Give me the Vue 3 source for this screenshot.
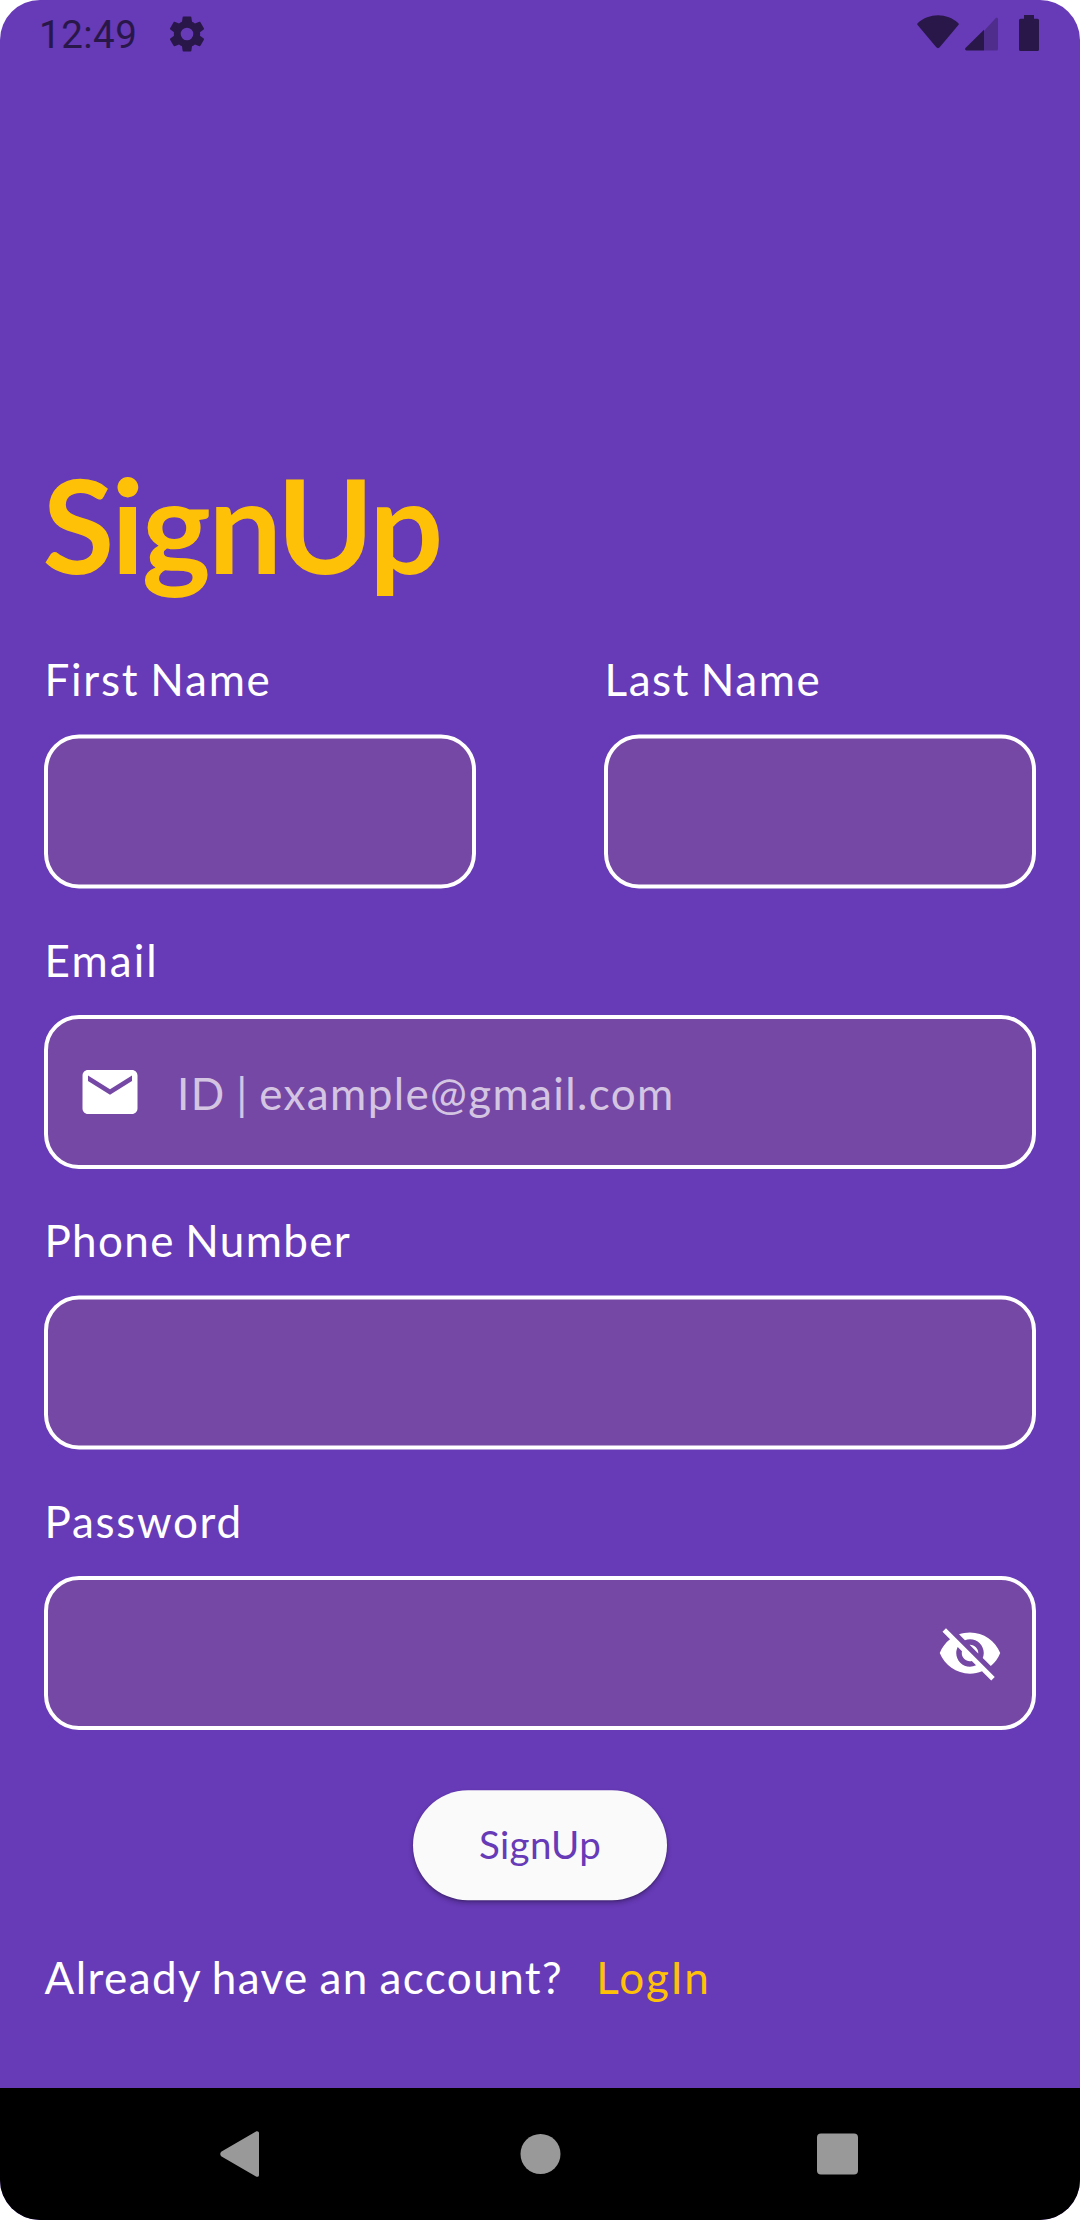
<script setup>
import { ref } from 'vue'

const firstName = ref('')
const lastName = ref('')
const email = ref('')
const phone = ref('')
const password = ref('')
</script>

<template>
  <div class="screen">
    <header class="status">
      <span class="clock">12:49</span>
      <svg class="gear" viewBox="0 0 24 24">
        <path d="M19.43 12.98c.04-.32.07-.64.07-.98s-.03-.66-.07-.98l2.11-1.65c.19-.15.24-.42.12-.64l-2-3.46c-.12-.22-.39-.3-.61-.22l-2.49 1c-.52-.4-1.08-.73-1.69-.98l-.38-2.65C14.46 2.18 14.25 2 14 2h-4c-.25 0-.46.18-.49.42l-.38 2.65c-.61.25-1.17.59-1.69.98l-2.49-1c-.23-.09-.49 0-.61.22l-2 3.46c-.13.22-.07.49.12.64l2.11 1.65c-.04.32-.07.65-.07.98s.03.66.07.98l-2.11 1.65c-.19.15-.24.42-.12.64l2 3.46c.12.22.39.3.61.22l2.49-1c.52.4 1.08.73 1.69.98l.38 2.65c.03.24.24.42.49.42h4c.25 0 .46-.18.49-.42l.38-2.65c.61-.25 1.17-.59 1.69-.98l2.49 1c.23.09.49 0 .61-.22l2-3.46c.12-.22.07-.49-.12-.64l-2.11-1.65zM12 15.6a3.6 3.6 0 1 1 0-7.2 3.6 3.6 0 0 1 0 7.2z" />
      </svg>
      <div class="indicators">
        <svg class="wifi" width="42" height="34" viewBox="0 0 42 34">
          <path d="M.6 8.2C6.500 3 13.500.3 21 .3s14.500 2.700 20.400 7.900c.5.5.5 1.300 0 1.900L22.700 32.300c-.9 1.100-2.500 1.100-3.400 0L.6 10.100c-.5-.6-.5-1.400 0-1.900z" />
        </svg>
        <svg class="signal" width="33" height="34" viewBox="0 0 33 34">
          <path opacity=".38" d="M19 14 30.600 1.200c.8-.9 2.400-.4 2.400.9V32a1.500 1.500 0 0 1-1.500 1.500H19z" />
          <path d="M19 12.700V33.500H1.500C.2 33.500-.4 32 .5 31.100z" />
        </svg>
        <svg class="battery" width="20" height="36" viewBox="0 0 20 36">
          <path d="M5 0h10v3.700h3.500A1.500 1.500 0 0 1 20 5.200v29.300a1.500 1.500 0 0 1-1.500 1.500h-17A1.500 1.500 0 0 1 0 34.500V5.200a1.500 1.500 0 0 1 1.500-1.500H5z" />
        </svg>
      </div>
    </header>

    <main class="form">
      <h1 class="title">SignUp</h1>

      <div class="row">
        <label class="field">
          <span class="label first">First Name</span>
          <span class="box half"><input v-model="firstName" type="text" /></span>
        </label>
        <label class="field">
          <span class="label last">Last Name</span>
          <span class="box half"><input v-model="lastName" type="text" /></span>
        </label>
      </div>

      <label class="field email">
        <span class="label short">Email</span>
        <span class="box">
          <svg class="icon" viewBox="0 0 24 24">
            <path d="M20 4H4c-1.100 0-1.990.9-1.990 2L2 18c0 1.100.9 2 2 2h16c1.100 0 2-.9 2-2V6c0-1.100-.9-2-2-2zm0 4l-8 5-8-5V6l8 5 8-5v2z" />
          </svg>
          <input v-model="email" class="hinted" type="text" placeholder="ID | example@gmail.com" />
        </span>
      </label>

      <label class="field phone">
        <span class="label number">Phone Number</span>
        <span class="box half"><input v-model="phone" type="text" /></span>
      </label>

      <label class="field password">
        <span class="label secret">Password</span>
        <span class="box">
          <input v-model="password" type="password" />
          <svg class="icon" viewBox="0 0 24 24">
            <path d="M12 7c2.760 0 5 2.240 5 5 0 .65-.13 1.260-.36 1.830l2.920 2.920c1.510-1.260 2.700-2.890 3.430-4.750-1.730-4.390-6-7.500-11-7.500-1.400 0-2.740.25-3.980.7l2.160 2.160C10.740 7.130 11.350 7 12 7zM2 4.270l2.280 2.280.46.46C3.080 8.300 1.780 10.020 1 12c1.730 4.390 6 7.500 11 7.500 1.550 0 3.030-.3 4.380-.84l.42.42L19.730 22 21 20.730 3.270 3 2 4.270zM7.530 9.800l1.550 1.550c-.05.21-.08.43-.08.65 0 1.660 1.340 3 3 3 .22 0 .44-.03.65-.08l1.550 1.550c-.67.33-1.410.53-2.200.53-2.760 0-5-2.240-5-5 0-.79.2-1.530.53-2.200zm4.310-.78l3.150 3.150.02-.16c0-1.660-1.340-3-3-3l-.17.01z" />
          </svg>
        </span>
      </label>

      <button class="submit" type="button">SignUp</button>

      <p class="footer">
        <span class="question">Already have an account?</span>
        <a class="login">LogIn</a>
      </p>
    </main>

    <nav class="nav">
      <svg width="1080" height="132" viewBox="0 0 1080 132">
        <path d="M256 43.500 222 63.200c-2.300 1.300-2.300 4.300 0 5.600L256 88.500c1.400.8 3 0 3-1.600V45.100c0-1.600-1.600-2.400-3-1.600z" />
        <circle cx="540.500" cy="66" r="20" />
        <rect x="817" y="45.500" width="41" height="41" rx="4" />
      </svg>
    </nav>
  </div>
</template>

<style>
body {
  background: #fff;
}
</style>

<style scoped>
.screen {
  display: flex;
  flex-direction: column;
  width: 1080px;
  height: 2220px;
  overflow: hidden;
  border-radius: 40px;
  background: #673ab7;
  color: #fff;
  font-family: Lato, sans-serif;
  font-size: 44px;
  line-height: 52px;
}

.status {
  box-sizing: border-box;
  display: flex;
  align-items: flex-start;
  height: 66px;
  padding: 0 41px 0 39px;
  color: #291749;
}

.status svg {
  fill: #291749;
}

.clock {
  width: 98px;
  padding-top: 12px;
  font: 400 38.5px/45px Roboto, sans-serif;
  letter-spacing: 0.500px;
}

.gear {
  width: 42px;
  height: 42px;
  margin: 12.500px 0 0 29px;
}

.indicators {
  display: flex;
  margin-left: auto;
}

.wifi {
  margin-top: 15px;
}

.signal {
  margin: 16.500px 21px 0 6px;
}

.battery {
  margin-top: 15px;
}

.form {
  box-sizing: border-box;
  display: flex;
  flex: 1;
  flex-direction: column;
  padding: 379px 44px 0;
}

.title {
  margin: 0 0 51px -1.500px;
  color: #ffc107;
  font-size: 131px;
  font-weight: 700;
  letter-spacing: -2.750px;
  line-height: 157px;
}

.row {
  display: grid;
  grid-template-columns: repeat(2, minmax(0, 1fr));
  gap: 128px;
}

.field {
  display: flex;
  flex-direction: column;
  gap: 29px;
}

.email,
.password {
  margin-top: 46px;
}

.phone {
  margin-top: 45px;
}

.label {
  padding-left: 0.500px;
  white-space: nowrap;
  word-spacing: -2px;
}

.first {
  letter-spacing: 1.750px;
}

.last {
  letter-spacing: 1.560px;
}

.short {
  letter-spacing: 2.100px;
}

.number {
  letter-spacing: 1.330px;
}

.secret {
  letter-spacing: 1.700px;
}

.box {
  box-sizing: border-box;
  display: flex;
  align-items: center;
  height: 154px;
  padding: 0 29px;
  border: 4px solid #fff;
  border-radius: 35px;
  background: #7648a5;
}

.half {
  transform: translateY(0.5px);
}

.box input {
  flex: 1;
  width: 0;
  min-width: 0;
  height: 52px;
  padding: 0;
  border: 0;
  outline: 0;
  background: none;
  color: #fff;
  font: inherit;
}

.box .hinted {
  margin: 2px 0 0 34px;
  letter-spacing: 1.376px;
  word-spacing: -2px;
}

.hinted::placeholder {
  color: rgba(255, 255, 255, 0.7);
  opacity: 1;
}

.icon {
  flex: none;
  width: 66px;
  height: 66px;
  fill: #fff;
}

.submit {
  align-self: center;
  width: 254px;
  height: 110px;
  margin-top: 60px;
  padding: 0 0 2px;
  border: 0;
  border-radius: 55px;
  background: #fafafa;
  box-shadow: 0 3px 5px rgba(0, 0, 0, 0.26), 0 1px 2px rgba(0, 0, 0, 0.2);
  color: #673ab7;
  font: 400 38.5px/46px Lato, sans-serif;
  letter-spacing: 0.360px;
  transform: translateY(0.3px);
}

.footer {
  display: flex;
  gap: 33px;
  margin: 51px 0 0;
  padding-left: 0.500px;
  white-space: nowrap;
}

.question {
  letter-spacing: 1.430px;
  word-spacing: -2px;
}

.login {
  color: #ffc107;
  letter-spacing: 2px;
}

.nav {
  height: 132px;
  background: #000;
}

.nav svg {
  display: block;
  fill: #999;
}
</style>
